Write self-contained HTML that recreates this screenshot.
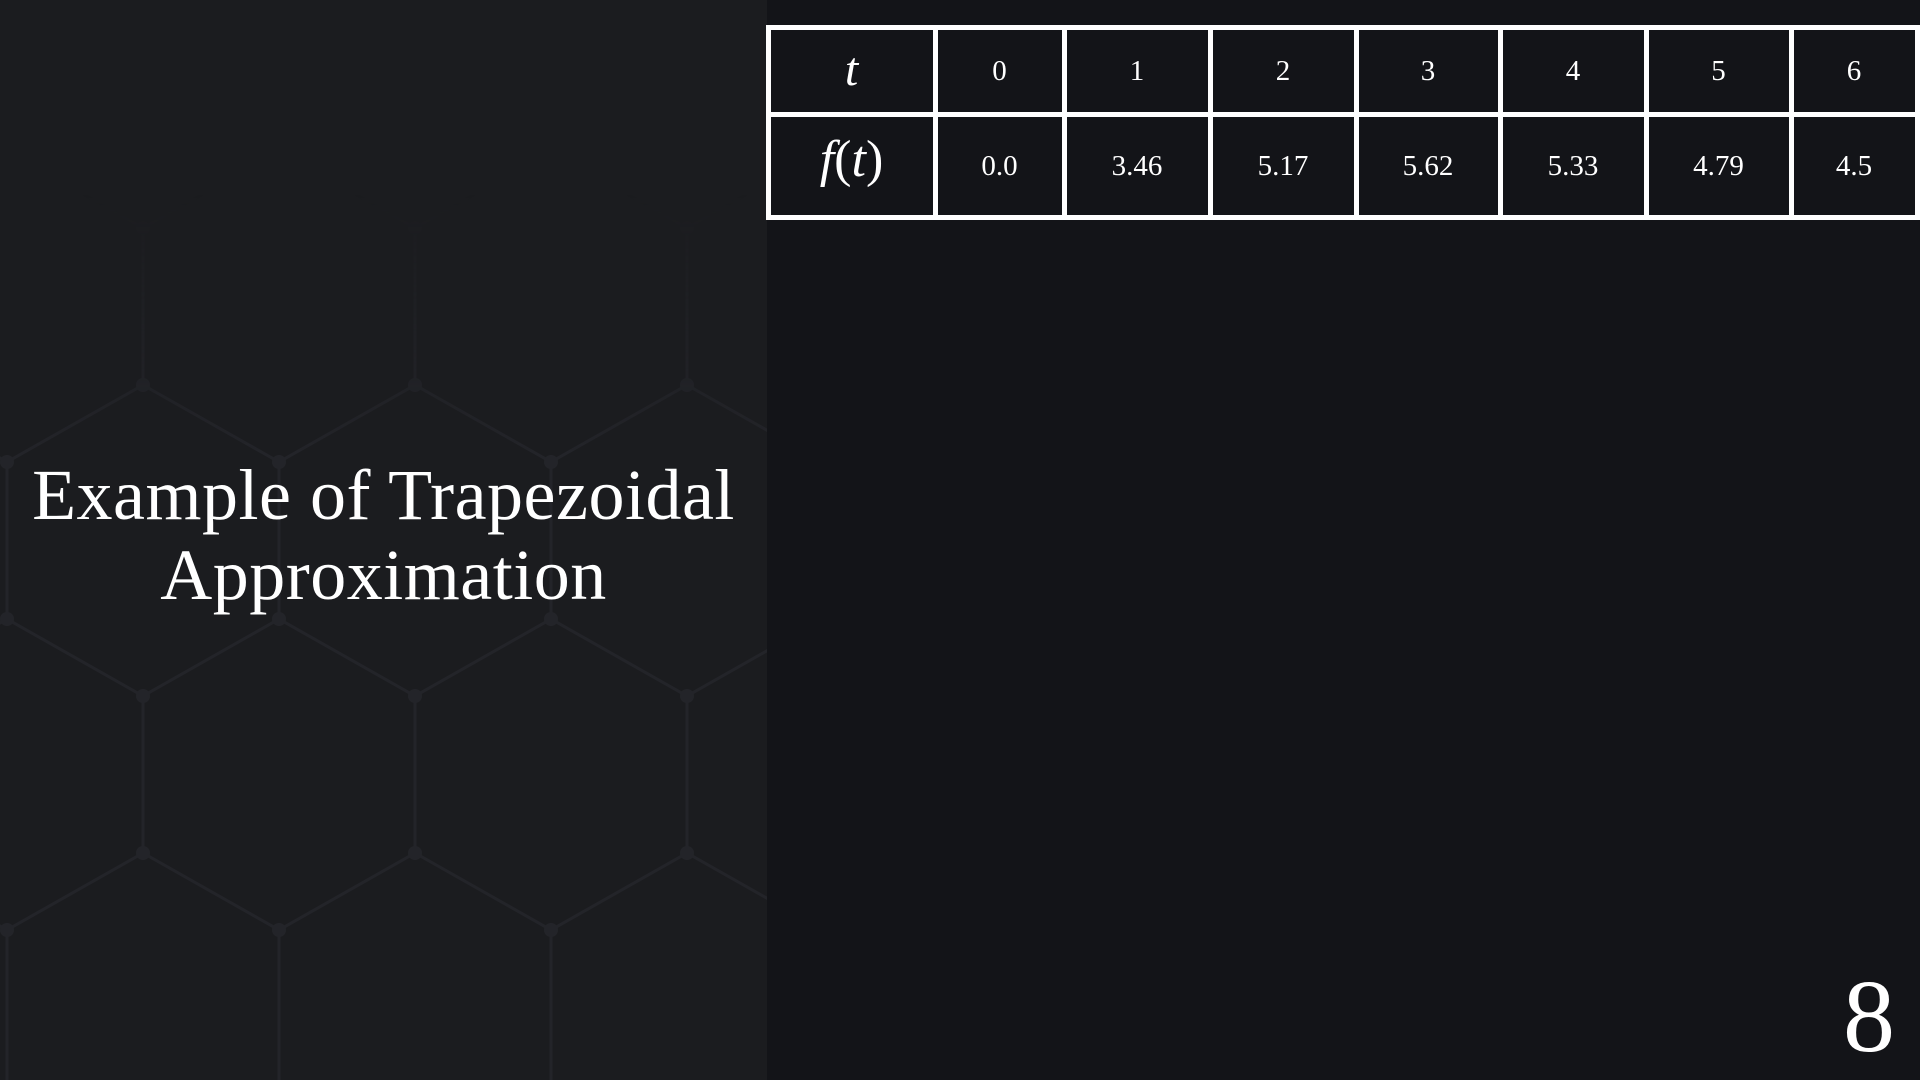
<!DOCTYPE html>
<html><head><meta charset="utf-8"><style>
html,body{margin:0;padding:0;width:1920px;height:1080px;overflow:hidden;background:#131418;font-family:"Liberation Serif",serif;color:#fff}
#left{position:absolute;left:0;top:0;width:767px;height:1080px;background:#1b1c1f;overflow:hidden}
.title{position:absolute;left:0;width:767px;text-align:center;font-size:72px;line-height:80px;top:455px;letter-spacing:0.5px}
.ln{position:absolute;background:#fff}
.c{position:absolute;text-align:center;font-size:29px}
.num8{position:absolute;left:1843px;top:962px;font-size:104px;line-height:110px}
</style></head><body>
<div id="left">
<svg width="767" height="1080" style="position:absolute;left:0;top:0">
<defs>
<linearGradient id="g" x1="0" y1="0" x2="0" y2="1">
<stop offset="0.18" stop-color="#fff" stop-opacity="0"/>
<stop offset="0.42" stop-color="#fff" stop-opacity="1"/>
</linearGradient>
<mask id="m"><rect width="767" height="1080" fill="url(#g)"/></mask>
<pattern id="p" width="272" height="468" patternUnits="userSpaceOnUse" patternTransform="translate(7,228)">
<g stroke="#232429" stroke-width="3" fill="none">
<path d="M136 0V157L0 234M136 157L272 234M0 234V391L136 468M272 234V391L136 468"/>
</g>
<g fill="#232429">
<circle cx="136" cy="0" r="7"/><circle cx="136" cy="157" r="7"/><circle cx="0" cy="234" r="7"/><circle cx="272" cy="234" r="7"/><circle cx="0" cy="391" r="7"/><circle cx="272" cy="391" r="7"/><circle cx="136" cy="468" r="7"/>
</g>
</pattern>
</defs>
<rect width="767" height="1080" fill="url(#p)" mask="url(#m)"/>
</svg>
<div class="title">Example of Trapezoidal<br>Approximation</div>
</div>

<div class="ln" style="left:766px;top:25px;width:1154px;height:5px"></div>
<div class="ln" style="left:766px;top:112px;width:1154px;height:5px"></div>
<div class="ln" style="left:766px;top:215px;width:1154px;height:5px"></div>
<div class="ln" style="left:766px;top:25px;width:5px;height:195px"></div>
<div class="ln" style="left:933px;top:25px;width:5px;height:195px"></div>
<div class="ln" style="left:1062px;top:25px;width:5px;height:195px"></div>
<div class="ln" style="left:1208px;top:25px;width:5px;height:195px"></div>
<div class="ln" style="left:1354px;top:25px;width:5px;height:195px"></div>
<div class="ln" style="left:1498px;top:25px;width:5px;height:195px"></div>
<div class="ln" style="left:1644px;top:25px;width:5px;height:195px"></div>
<div class="ln" style="left:1789px;top:25px;width:5px;height:195px"></div>
<div class="ln" style="left:1915px;top:25px;width:5px;height:195px"></div>

<div class="c" style="left:768px;width:167px;top:42px;font-size:48px;font-style:italic">t</div>
<div class="c" style="left:768px;width:167px;top:130px;font-size:52px"><i>f</i>(<i>t</i>)</div>

<div class="c" style="left:935px;width:129px;top:55px">0</div>
<div class="c" style="left:1064px;width:146px;top:55px">1</div>
<div class="c" style="left:1210px;width:146px;top:55px">2</div>
<div class="c" style="left:1356px;width:144px;top:55px">3</div>
<div class="c" style="left:1500px;width:146px;top:55px">4</div>
<div class="c" style="left:1646px;width:145px;top:55px">5</div>
<div class="c" style="left:1791px;width:126px;top:55px">6</div>

<div class="c" style="left:935px;width:129px;top:150px">0.0</div>
<div class="c" style="left:1064px;width:146px;top:150px">3.46</div>
<div class="c" style="left:1210px;width:146px;top:150px">5.17</div>
<div class="c" style="left:1356px;width:144px;top:150px">5.62</div>
<div class="c" style="left:1500px;width:146px;top:150px">5.33</div>
<div class="c" style="left:1646px;width:145px;top:150px">4.79</div>
<div class="c" style="left:1791px;width:126px;top:150px">4.5</div>

<div class="num8">8</div>
</body></html>
